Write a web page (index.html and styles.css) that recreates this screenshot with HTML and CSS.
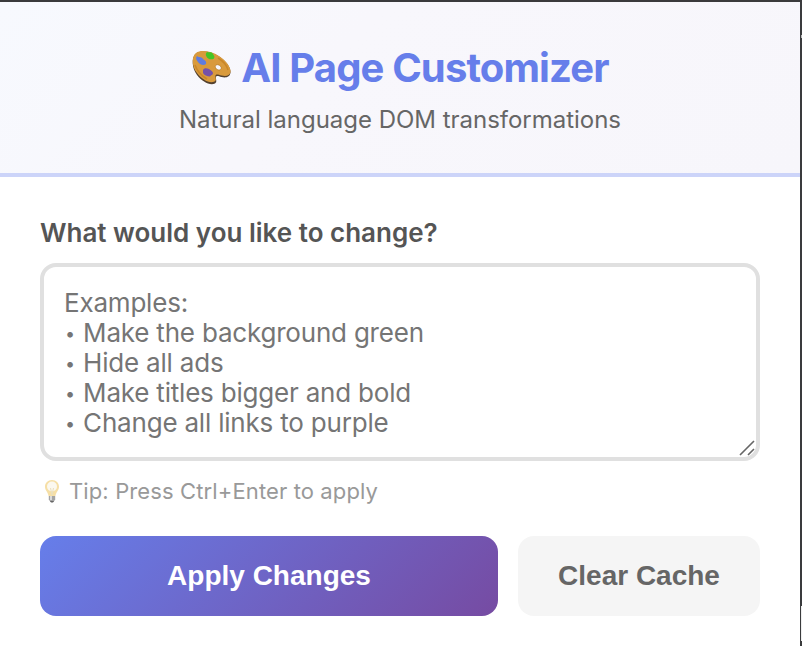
FILE: index.html
```html
<!DOCTYPE html>
<html lang="en">
<head>
<meta charset="utf-8">
<title>AI Page Customizer</title>
<link rel="stylesheet" href="styles.css">
</head>
<body>
<div class="popup">
  <header class="header">
    <h1 class="title">
      <svg class="palette" viewBox="0 0 42 36" aria-hidden="true">
        <path d="M5 3C10-.5 20 1 28 6c7 4.500 12 11 11.500 16-.5 5-5 5.500-9 4.500-3-.8-5-2-5.500 0-.4 2 1.500 5-1 6.500-5 2.500-13-2-18-8.500C1 18 0 7 5 3z" fill="#54412f" transform="translate(0 .5)"/>
        <path d="M5 3C10-.5 20 1 28 6c7 4.500 12 11 11.500 16-.5 4-5 4.500-9 3.500-3-.8-5.500-2-6 0-.4 2 1.500 4.500-1 6-5 2.500-12.500-2-17.500-8.500C1 17 0 7 5 3z" fill="#d99a3c"/>
        <path d="M27 8c5 3 9 8 10 12M4 15c2 6 7 11 12 14" fill="none" stroke="#c98628" stroke-width="1.500"/>
        <path d="M24.500 17.500c1.200 2.700 4.500 3.200 5.500 1.400.9-1.700-1.200-4-3.300-4.200-1.800 0-3 1.300-2.200 2.800z" fill="#f8f8fd" stroke="#ab711f" stroke-width=".6"/>
        <path d="M6 6c2 2 4 0 6 3 1 1 4 2 3 5-2 2-6 1-8-2-1-2-3-3-1-6z" fill="#5f7ce0"/>
        <path d="M16 2c2 1 4-1 6 2 1 2 2 2 1 4.500-2 1.500-5 1-7-1-1-2-2-3.500 0-5.500z" fill="#43c525"/>
        <path d="M12 20c1-2.500 4-2 6-1 2 2 3 1 4 4 0 2-2 2-3 3.500-3 0-6-1.500-7-3.500z" fill="#7652a8"/>
      </svg>
      <span class="title-text">AI Page Customizer</span>
    </h1>
    <p class="subtitle">Natural language DOM transformations</p>
  </header>
  <main class="content">
    <div class="label">What would you like to change?</div>
    <div class="field">
      <div class="line">Examples:</div>
      <div class="line"><span class="bullet">•</span> Make the background green</div>
      <div class="line"><span class="bullet">•</span> Hide all ads</div>
      <div class="line"><span class="bullet">•</span> Make titles bigger and bold</div>
      <div class="line"><span class="bullet">•</span> Change all links to purple</div>
      <svg class="grip" viewBox="0 0 16 16" aria-hidden="true"><path d="M1 15 15 1M9 15l6-6"/></svg>
    </div>
    <p class="tip">
      <svg class="bulb" viewBox="0 0 16 24" aria-hidden="true">
        <path d="M8 1C3.800 1 1 4 1 7.700 1 11.500 4 13 4.600 17h6.800C12 13 15 11.500 15 7.700 15 4 12.200 1 8 1z" fill="#f6dfa6"/>
        <ellipse cx="8" cy="7.500" rx="5" ry="5" fill="#fbf8ef"/>
        <path d="M6.500 9 8 16l1.500-7" fill="none" stroke="#eadfbe"/>
        <path d="M4.800 17h6.400v3.500L9.500 23h-3l-1.700-2.500z" fill="#a4a4a4"/>
        <path d="M6 17h2v4H6z" fill="#dadada"/>
        <path d="M6 22h4l-1 1.500H7z" fill="#666"/>
      </svg>
      <span>Tip: Press Ctrl+Enter to apply</span>
    </p>
    <div class="actions">
      <button class="button primary">Apply Changes</button>
      <button class="button secondary">Clear Cache</button>
    </div>
  </main>
</div>
<div class="edge"><i class="edge-mark"></i><i class="edge-light"></i></div>
</body>
</html>
```
FILE: styles.css
```css
* { box-sizing: border-box; }
body {
  margin: 0;
  width: 802px;
  height: 646px;
  display: flex;
  overflow: hidden;
  border-top: 2px solid #3a3a3c;
  background: #fff;
  font-family: Inter, "Liberation Sans", sans-serif;
}
.popup { width: 800px; }
.edge {
  width: 2px;
  background: #3a3b3d;
  display: flex;
  flex-direction: column;
  align-items: flex-end;
}
.edge-mark { width: 1px; height: 3px; margin-top: 33px; background: #bbb; }
.edge-light { width: 1px; height: 35px; margin-top: 568px; background: #eee; }
.header {
  height: 175px;
  padding-top: 42px;
  border-bottom: 4px solid #ccd4f9;
  background: linear-gradient(135deg, #f7f9fe, #f8f7fc 40%, #f7f6fb);
  text-align: center;
}
.title {
  margin: 0;
  height: 48px;
  display: flex;
  justify-content: center;
  align-items: center;
  gap: 8px;
  color: #667eea;
  font-size: 40px;
  font-weight: 700;
  line-height: 48px;
  letter-spacing: -0.87px;
}
.palette { width: 42px; height: 36px; }
.subtitle {
  margin: 13px 0 0;
  color: #666;
  font-size: 24px;
  line-height: 29px;
  letter-spacing: -0.02px;
}
.content { padding: 40px; }
.label {
  height: 32px;
  color: #555;
  font-size: 26px;
  font-weight: 600;
  line-height: 32px;
}
.field {
  position: relative;
  height: 198px;
  margin-top: 14px;
  padding: 21px 20px;
  border: 4px solid #e0e0e0;
  border-radius: 16px;
  background: #fff;
  color: #757575;
  font-size: 26px;
  line-height: 30px;
  letter-spacing: -0.2px;
}
.line { height: 30px; white-space: nowrap; }
.bullet {
  display: inline-block;
  width: 12px;
  font-size: 18px;
  line-height: 1;
  text-align: center;
  vertical-align: 2px;
}
.grip {
  position: absolute;
  right: 1px;
  bottom: 1px;
  width: 16px;
  height: 16px;
  fill: none;
  stroke: #666;
  stroke-width: 1.6;
}
.tip {
  display: flex;
  align-items: center;
  gap: 9px;
  height: 28px;
  margin: 16px 0 31px;
  padding-left: 4px;
  color: #999;
  font-size: 22px;
  line-height: 28px;
  letter-spacing: 0.12px;
}
.bulb { width: 16px; height: 24px; }
.actions { display: flex; gap: 20px; }
.button {
  height: 80px;
  padding: 0;
  border: 0;
  border-radius: 16px;
  font: 700 28px/32px "Liberation Sans", Arial, sans-serif;
}
.primary {
  width: 458px;
  background: linear-gradient(135deg, #667eea, #764ba2);
  color: #fff;
}
.secondary { width: 242px; background: #f5f5f5; color: #666; }
```
